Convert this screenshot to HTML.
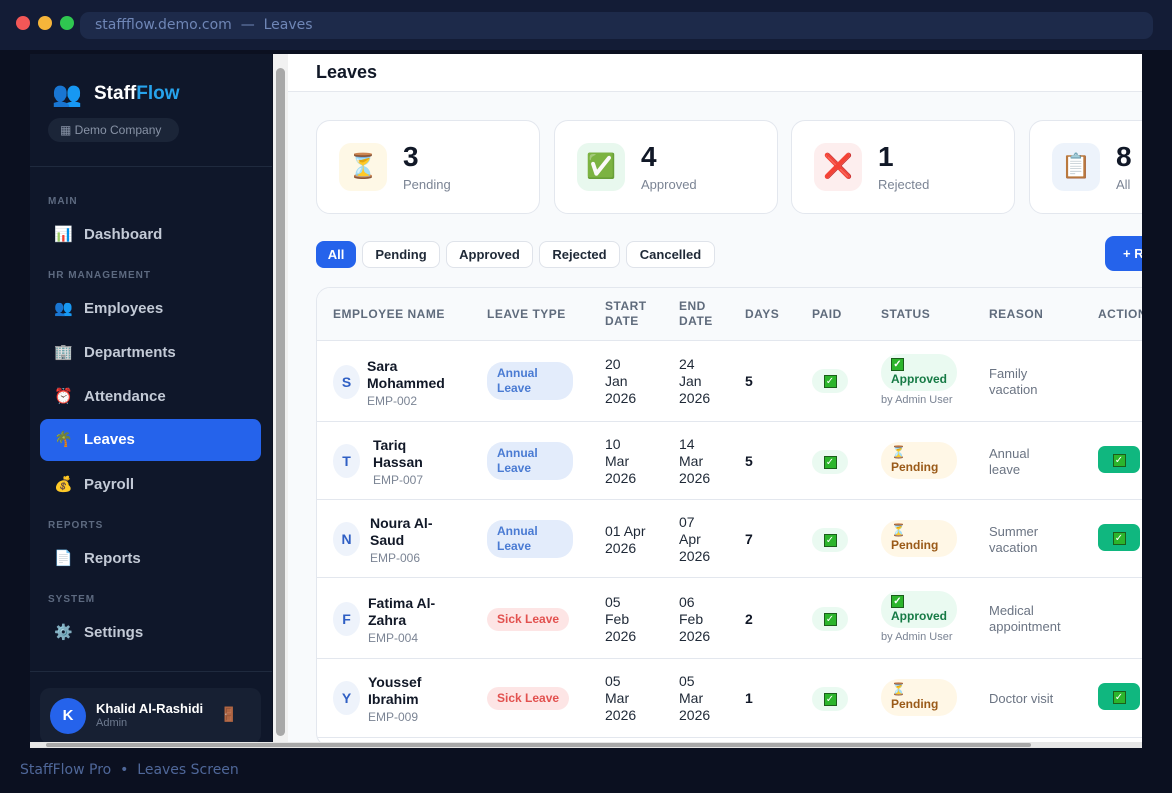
<!DOCTYPE html>
<html><head><meta charset="utf-8"><style>
*{box-sizing:border-box;margin:0;padding:0}
body{width:1172px;height:793px;overflow:hidden;background:#0b1020;font-family:"Liberation Sans",sans-serif;position:relative}
.top{position:absolute;left:0;top:0;width:1172px;height:50px;background:#131c36}
.dot{position:absolute;top:16px;width:14px;height:14px;border-radius:50%}
.url{position:absolute;left:80px;top:12px;width:1073px;height:27px;border-radius:9px;background:#1d2a4a;color:#6f86b6;font-family:"DejaVu Sans",sans-serif;font-size:14px;line-height:27px;padding-left:15px}
.side{position:absolute;left:30px;top:54px;width:242px;height:690px;background:#0f172a}
.sec{position:absolute;left:18px;font-size:10px;font-weight:bold;color:#5d6a80;letter-spacing:1px}
.nav{position:absolute;left:10px;width:221px;height:42px;border-radius:8px;color:#c3cad6;font-size:15px;font-weight:bold;line-height:42px;padding-left:14px}
.nav i{font-style:normal;display:inline-block;width:30px;font-size:15px}
.main{position:absolute;left:273px;top:54px;width:869px;height:688px;background:#f8fafc;overflow:hidden}
.hdr{position:absolute;left:15px;top:0;width:854px;height:38px;background:#fff;border-bottom:1px solid #e5e8ee}
.card{position:absolute;top:66px;width:224px;height:94px;background:#fff;border:1px solid #e3e7ee;border-radius:14px}
.ic{position:absolute;left:22px;top:22px;width:48px;height:48px;border-radius:12px;text-align:center;line-height:48px;font-size:24px}
.num{position:absolute;left:86px;top:20px;font-size:28px;font-weight:bold;color:#111827}
.lbl{position:absolute;left:86px;top:56px;font-size:13px;color:#7b8494}
.pill{position:absolute;top:187px;height:27px;border-radius:8px;background:#fff;border:1px solid #dfe3ea;font-size:13px;font-weight:bold;color:#1f2937;line-height:25px;text-align:center}
.tbl{position:absolute;left:43px;top:233px;width:860px;height:460px;background:#fff;border:1px solid #e3e7ee;border-radius:14px;overflow:hidden}
.th{position:absolute;top:0;height:53px;left:0;width:860px;background:#f8fafc;border-bottom:1px solid #e3e7ee}
.h{position:absolute;font-size:12px;font-weight:bold;color:#5f6b7c;letter-spacing:.5px;line-height:15px}
.row{position:absolute;left:0;width:860px;border-bottom:1px solid #e3e7ee}
.c{position:absolute;font-size:14px;color:#1f2937;line-height:17px}
.av{position:absolute;left:16px;width:27px;height:34px;border-radius:50%;background:#eef3fb;color:#2f5fc4;font-weight:bold;font-size:14px;text-align:center;line-height:34px}
.nm{font-weight:bold;color:#111827}
.emp{font-size:12px;color:#7b8494}
.lt{position:absolute;left:170px;border-radius:16px;font-size:12px;font-weight:bold;padding:4px 10px;line-height:15px}
.an{background:#e3ecfb;color:#4a7bd3;width:86px}
.sk{background:#fde5e5;color:#e2514f}
.paid{position:absolute;left:495px;width:36px;height:24px;border-radius:12px;background:#eafaf1;text-align:center;font-size:12px;line-height:24px}
.st{position:absolute;left:564px;width:76px;border-radius:18px;font-size:12px;font-weight:bold;padding:3px 0 4px 10px;line-height:15px}
.ap{background:#eafaf1;color:#167a45}
.pe{background:#fff7e6;color:#9a5a18}
.by{position:absolute;left:564px;font-size:11px;color:#7b8494}
.rs{position:absolute;left:672px;font-size:13px;color:#6b7483;line-height:16px}
.act{position:absolute;left:781px;width:42px;height:27px;border-radius:7px;background:#10b77f;text-align:center;line-height:27px;font-size:13px}
.chk{display:inline-block;width:13px;height:13px;background:#2cb52c;border:1px solid #1a5e1a;color:#fff;font-size:10px;line-height:11px;text-align:center;vertical-align:middle}
</style></head><body>
<div class="top">
<div class="dot" style="left:16px;background:#f25757"></div>
<div class="dot" style="left:38px;background:#f6b53a"></div>
<div class="dot" style="left:60px;background:#2fc750"></div>
<div class="url">staffflow.demo.com &nbsp;— &nbsp;Leaves</div>
</div>

<div class="side">
<div style="position:absolute;left:22px;top:26px;font-size:24px">👥</div>
<div style="position:absolute;left:64px;top:29px;font-size:19px;font-weight:bold;color:#fff">Staff<span style="color:#27a3ec">Flow</span></div>
<div style="position:absolute;left:18px;top:64px;width:131px;height:24px;border-radius:12px;background:#1b2538;color:#8893a6;font-size:12px;line-height:24px;padding-left:12px">▦ Demo Company</div>
<div style="position:absolute;left:0;top:112px;width:242px;border-top:1px solid #1f2a3e"></div>
<div class="sec" style="top:142px">MAIN</div>
<div class="nav" style="top:160px"><i>📊</i>Dashboard</div>
<div class="sec" style="top:216px">HR MANAGEMENT</div>
<div class="nav" style="top:234px"><i>👥</i>Employees</div>
<div class="nav" style="top:278px"><i>🏢</i>Departments</div>
<div class="nav" style="top:322px"><i>⏰</i>Attendance</div>
<div class="nav" style="top:365px;background:#2563eb;color:#fff"><i>🌴</i>Leaves</div>
<div class="nav" style="top:410px"><i>💰</i>Payroll</div>
<div class="sec" style="top:466px">REPORTS</div>
<div class="nav" style="top:484px"><i>📄</i>Reports</div>
<div class="sec" style="top:540px">SYSTEM</div>
<div class="nav" style="top:558px"><i>⚙️</i>Settings</div>
<div style="position:absolute;left:0;top:617px;width:242px;border-top:1px solid #1f2a3e"></div>
<div style="position:absolute;left:10px;top:634px;width:221px;height:56px;border-radius:10px;background:#172033">
<div style="position:absolute;left:10px;top:10px;width:36px;height:36px;border-radius:50%;background:#2563eb;color:#fff;font-weight:bold;text-align:center;line-height:36px;font-size:15px">K</div>
<div style="position:absolute;left:56px;top:13px;color:#fff;font-weight:bold;font-size:13px">Khalid Al-Rashidi</div>
<div style="position:absolute;left:56px;top:29px;color:#6e7a8f;font-size:11px">Admin</div>
<div style="position:absolute;left:180px;top:18px;font-size:14px">🚪</div>
</div>
</div>

<div class="main">
<div style="position:absolute;left:0;top:0;width:15px;height:688px;background:#f1f1f1"><div style="position:absolute;left:3px;top:14px;width:9px;height:668px;border-radius:5px;background:#a8a8a8"></div></div>
<div class="hdr"><div style="position:absolute;left:28px;top:8px;font-size:18px;font-weight:bold;color:#111827">Leaves</div></div>
<div class="card" style="left:43px"><div class="ic" style="background:#fef8e6">⏳</div><div class="num">3</div><div class="lbl">Pending</div></div>
<div class="card" style="left:281px"><div class="ic" style="background:#e8f8ee">✅</div><div class="num">4</div><div class="lbl">Approved</div></div>
<div class="card" style="left:518px"><div class="ic" style="background:#fdeeee">❌</div><div class="num">1</div><div class="lbl">Rejected</div></div>
<div class="card" style="left:756px"><div class="ic" style="background:#edf3fb">📋</div><div class="num">8</div><div class="lbl">All</div></div>
<div class="pill" style="left:43px;width:40px;background:#2563eb;border-color:#2563eb;color:#fff">All</div>
<div class="pill" style="left:89px;width:78px">Pending</div>
<div class="pill" style="left:173px;width:87px">Approved</div>
<div class="pill" style="left:266px;width:81px">Rejected</div>
<div class="pill" style="left:353px;width:89px">Cancelled</div>
<div style="position:absolute;left:832px;top:182px;width:60px;height:35px;border-radius:9px;background:#2563eb;color:#fff;font-weight:bold;font-size:13px;line-height:35px;padding-left:18px">+ R</div>

<div class="tbl">
<div class="th">
<div class="h" style="left:16px;top:19px">EMPLOYEE NAME</div>
<div class="h" style="left:170px;top:19px">LEAVE TYPE</div>
<div class="h" style="left:288px;top:11px">START<br>DATE</div>
<div class="h" style="left:362px;top:11px">END<br>DATE</div>
<div class="h" style="left:428px;top:19px">DAYS</div>
<div class="h" style="left:495px;top:19px">PAID</div>
<div class="h" style="left:564px;top:19px">STATUS</div>
<div class="h" style="left:672px;top:19px">REASON</div>
<div class="h" style="left:781px;top:19px">ACTIONS</div>
</div>

<div class="row" style="top:53px;height:81px">
<div class="av" style="top:24px">S</div>
<div class="c" style="left:50px;top:17px"><span class="nm">Sara<br>Mohammed</span><br><span class="emp">EMP-002</span></div>
<div class="lt an" style="top:21px">Annual<br>Leave</div>
<div class="c" style="left:288px;top:15px">20<br>Jan<br>2026</div>
<div class="c" style="left:362px;top:15px">24<br>Jan<br>2026</div>
<div class="c nm" style="left:428px;top:32px">5</div>
<div class="paid" style="top:28px"><span class="chk">✓</span></div>
<div class="st ap" style="top:13px"><span class="chk">✓</span><br>Approved</div>
<div class="by" style="top:53px">by Admin User</div>
<div class="rs" style="top:25px">Family<br>vacation</div>
</div>

<div class="row" style="top:134px;height:78px">
<div class="av" style="top:22px">T</div>
<div class="c" style="left:56px;top:15px"><span class="nm">Tariq<br>Hassan</span><br><span class="emp">EMP-007</span></div>
<div class="lt an" style="top:20px">Annual<br>Leave</div>
<div class="c" style="left:288px;top:14px">10<br>Mar<br>2026</div>
<div class="c" style="left:362px;top:14px">14<br>Mar<br>2026</div>
<div class="c nm" style="left:428px;top:31px">5</div>
<div class="paid" style="top:28px"><span class="chk">✓</span></div>
<div class="st pe" style="top:20px">⏳<br>Pending</div>
<div class="rs" style="top:24px">Annual<br>leave</div>
<div class="act" style="top:24px"><span class="chk">✓</span></div>
</div>

<div class="row" style="top:212px;height:78px">
<div class="av" style="top:22px">N</div>
<div class="c" style="left:53px;top:15px"><span class="nm">Noura Al-<br>Saud</span><br><span class="emp">EMP-006</span></div>
<div class="lt an" style="top:20px">Annual<br>Leave</div>
<div class="c" style="left:288px;top:23px">01 Apr<br>2026</div>
<div class="c" style="left:362px;top:14px">07<br>Apr<br>2026</div>
<div class="c nm" style="left:428px;top:31px">7</div>
<div class="paid" style="top:28px"><span class="chk">✓</span></div>
<div class="st pe" style="top:20px">⏳<br>Pending</div>
<div class="rs" style="top:24px">Summer<br>vacation</div>
<div class="act" style="top:24px"><span class="chk">✓</span></div>
</div>

<div class="row" style="top:290px;height:81px">
<div class="av" style="top:24px">F</div>
<div class="c" style="left:51px;top:17px"><span class="nm">Fatima Al-<br>Zahra</span><br><span class="emp">EMP-004</span></div>
<div class="lt sk" style="top:30px">Sick Leave</div>
<div class="c" style="left:288px;top:16px">05<br>Feb<br>2026</div>
<div class="c" style="left:362px;top:16px">06<br>Feb<br>2026</div>
<div class="c nm" style="left:428px;top:33px">2</div>
<div class="paid" style="top:29px"><span class="chk">✓</span></div>
<div class="st ap" style="top:13px"><span class="chk">✓</span><br>Approved</div>
<div class="by" style="top:53px">by Admin User</div>
<div class="rs" style="top:25px">Medical<br>appointment</div>
</div>

<div class="row" style="top:371px;height:79px">
<div class="av" style="top:22px">Y</div>
<div class="c" style="left:51px;top:15px"><span class="nm">Youssef<br>Ibrahim</span><br><span class="emp">EMP-009</span></div>
<div class="lt sk" style="top:28px">Sick Leave</div>
<div class="c" style="left:288px;top:14px">05<br>Mar<br>2026</div>
<div class="c" style="left:362px;top:14px">05<br>Mar<br>2026</div>
<div class="c nm" style="left:428px;top:31px">1</div>
<div class="paid" style="top:28px"><span class="chk">✓</span></div>
<div class="st pe" style="top:20px">⏳<br>Pending</div>
<div class="rs" style="top:32px">Doctor visit</div>
<div class="act" style="top:24px"><span class="chk">✓</span></div>
</div>
</div>
</div>

<div style="position:absolute;left:30px;top:742px;width:1112px;height:6px;background:#e6e6e6"><div style="position:absolute;left:16px;top:1px;width:985px;height:4px;border-radius:2px;background:#a8a8a8"></div></div>
<div style="position:absolute;left:20px;top:762px;font-family:'DejaVu Sans',sans-serif;font-size:14px;color:#4f6799">StaffFlow Pro &nbsp;• &nbsp;Leaves Screen</div>
</body></html>
